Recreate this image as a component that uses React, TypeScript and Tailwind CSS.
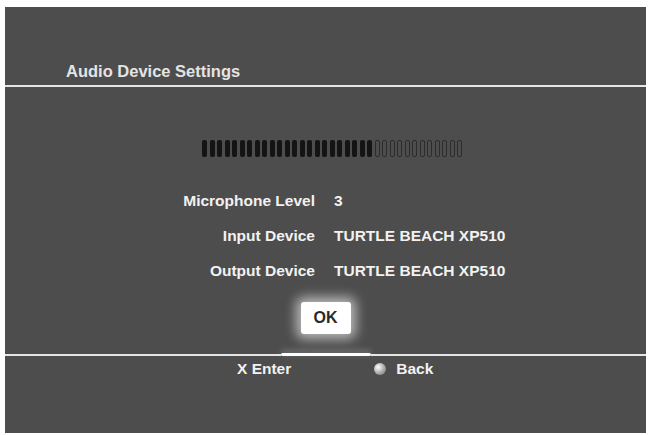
import React from "react";

const FILLED = 23;
const EMPTY = 12;

function LevelBar() {
  const segs = Array.from({ length: FILLED + EMPTY }, (_, i) => i < FILLED);
  return (
    <div className="flex gap-[2.5px]">
      {segs.map((on, i) =>
        on ? (
          <div key={i} className="w-[5px] h-[17px] rounded-[2px] bg-[#141414]" />
        ) : (
          <div key={i} className="w-[5px] h-[17px] rounded-[2px] border border-[#2c2c2c]" />
        )
      )}
    </div>
  );
}

function Row({ label, value }: { label: string; value: string }) {
  return (
    <div className="flex items-center h-[20px]">
      <div className="w-[310px] text-right">{label}</div>
      <div className="pl-[19px]">{value}</div>
    </div>
  );
}

export default function App() {
  return (
    <div className="w-[651px] h-[435px] bg-white pt-[7px] pl-[5px] font-['Liberation_Sans',Arial,sans-serif] font-bold text-[15.5px] text-[#f2f2f2]">
      <div className="w-[641px] h-[426px] bg-[#4d4d4d] flex flex-col">
        {/* header */}
        <div className="h-[78px] flex items-end pb-[6px] pl-[61px] text-[#e4e4e4]">
          <span className="leading-[16px] text-[16.5px]">Audio Device Settings</span>
        </div>
        <div className="h-[2px] bg-[#e6e6e6]" />

        {/* level meter */}
        <div className="mt-[53px] pl-[197px]">
          <LevelBar />
        </div>

        {/* settings */}
        <div className="mt-[34px] flex flex-col gap-[15px]">
          <Row label="Microphone Level" value="3" />
          <Row label="Input Device" value="TURTLE BEACH XP510" />
          <Row label="Output Device" value="TURTLE BEACH XP510" />
        </div>

        <div className="mt-[21px] flex justify-center">
          <button className="w-[50px] h-[32px] bg-white rounded-[3px] text-[#2a2a2a] text-[16px] shadow-[0_0_12px_5px_rgba(255,255,255,0.6)]">
            OK
          </button>
        </div>

        {/* footer divider with focus highlight */}
        <div className="mt-[19px] flex items-center">
          <div className="flex-1 h-[2px] bg-[#e6e6e6]" />
          <div className="w-[90px] h-[3px] bg-white rounded-full shadow-[0_-2px_6px_rgba(255,255,255,0.35)]" />
          <div className="flex-1 h-[2px] bg-[#e6e6e6]" />
        </div>

        <div className="mt-[5px] flex items-center pl-[232px] leading-[16px]">
          <span>X Enter</span>
          <span className="ml-[83px] w-[12px] h-[12px] rounded-full bg-[radial-gradient(circle_at_35%_35%,#ffffff,#b0b0b0_50%,#6a6a6a)]" />
          <span className="ml-[10px]">Back</span>
        </div>
      </div>
    </div>
  );
}
